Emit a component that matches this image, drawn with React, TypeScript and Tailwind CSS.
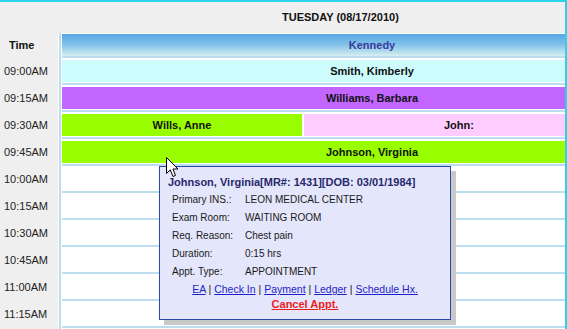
const times = [
  "09:00AM",
  "09:15AM",
  "09:30AM",
  "09:45AM",
  "10:00AM",
  "10:15AM",
  "10:30AM",
  "10:45AM",
  "11:00AM",
  "11:15AM",
];

const details = [
  { label: "Primary INS.:", value: "LEON MEDICAL CENTER" },
  { label: "Exam Room:", value: "WAITING ROOM" },
  { label: "Req. Reason:", value: "Chest pain" },
  { label: "Duration:", value: "0:15 hrs" },
  { label: "Appt. Type:", value: "APPOINTMENT" },
];

const links = ["EA", "Check In", "Payment", "Ledger", "Schedule Hx."];

const Cursor = () => (
  <svg
    className="absolute left-[166px] top-[155px]"
    width="13"
    height="21"
    viewBox="0 0 13 21"
  >
    <path
      d="M0.5 0.5 L0.5 16.5 L4.3 12.9 L7 19.5 L9.5 18.4 L6.9 12 L12 12 Z"
      fill="#ffffff"
      stroke="#000000"
      strokeWidth="1"
      strokeLinejoin="miter"
    />
  </svg>
);

const Row = ({ children }: { children?: React.ReactNode }) => (
  <div className="h-[27px] pt-[2px] pb-px border-b-2 border-[#bcdcf0] flex gap-[2px]">
    {children}
  </div>
);

const cell = "h-[22px] flex items-center justify-center font-bold text-[11px] text-[#111] whitespace-nowrap";

const App = () => {
  return (
    <div className="relative w-[567px] h-[329px] overflow-hidden bg-[#efefef] border-t-2 border-r-2 border-[#2cd2ea] font-['Liberation_Sans',Arial,sans-serif]">
      <div className="h-[31px] flex items-center pl-[282px] text-[11px] font-bold text-[#111]">
        TUESDAY (08/17/2010)
      </div>

      <div className="flex">
        <div className="w-[58px] shrink-0 text-[11px] text-[#222]">
          <div className="h-[25px] flex items-center pl-[9px] font-bold text-[#111]">Time</div>
          {times.map((t) => (
            <div key={t} className="h-[27px] flex items-center pl-[4px]">
              {t}
            </div>
          ))}
        </div>

        <div className="shrink-0 bg-white pl-px">
          <div className="w-[623px] border-l-2 border-[#bcdcf0] pl-px">
            <div className="h-[25px] pt-px border-b-2 border-[#bcdcf0]">
              <div className="h-full flex items-center justify-center bg-linear-to-b from-[#56a6e4] via-[#84c3ea] to-[#d6efef] text-[11px] font-bold text-[#3a3a9a]">
                Kennedy
              </div>
            </div>

            <Row>
              <div className={`${cell} flex-1 bg-[#ccfcfc]`}>Smith, Kimberly</div>
            </Row>
            <Row>
              <div className={`${cell} flex-1 bg-[#c266ff]`}>Williams, Barbara</div>
            </Row>
            <Row>
              <div className={`${cell} w-[240px] bg-[#99ff00]`}>Wills, Anne</div>
              <div className="h-[22px] flex-1 flex items-center pl-[140px] bg-[#ffccff] font-bold text-[11px] text-[#111]">
                <span className="w-[30px] overflow-hidden whitespace-nowrap">John:</span>
              </div>
            </Row>
            <Row>
              <div className={`${cell} flex-1 bg-[#99ff00]`}>Johnson, Virginia</div>
            </Row>
            {times.slice(4).map((t) => (
              <Row key={t} />
            ))}
            <Row />
          </div>
        </div>
      </div>

      <div className="absolute left-[159px] top-[164px] w-[292px] h-[154px] bg-[#e4e6fb] border border-[#2b4aa8] shadow-[5px_5px_0_#c8c8c8] pt-[6px]">
        <div className="pl-[8px] leading-[18px] text-[11px] font-bold text-[#27286c] whitespace-nowrap">
          Johnson, Virginia[MR#: 1431][DOB: 03/01/1984]
        </div>
        {details.map((d) => (
          <div key={d.label} className="flex pl-[12px] leading-[18px] text-[10px] text-[#1a1a1a]">
            <span className="w-[73px] shrink-0">{d.label}</span>
            <span>{d.value}</span>
          </div>
        ))}
        <div className="text-center leading-[16px] text-[10.5px] text-[#222]">
          {links.map((l, i) => (
            <span key={l}>
              {i > 0 && " | "}
              <a href="#" className="underline text-[#1f1fc8]">
                {l}
              </a>
            </span>
          ))}
        </div>
        <div className="text-center leading-[14px] text-[11px] font-bold">
          <a href="#" className="underline text-[#ee1c1c]">
            Cancel Appt.
          </a>
        </div>
      </div>

      <Cursor />
    </div>
  );
};

export default App;
